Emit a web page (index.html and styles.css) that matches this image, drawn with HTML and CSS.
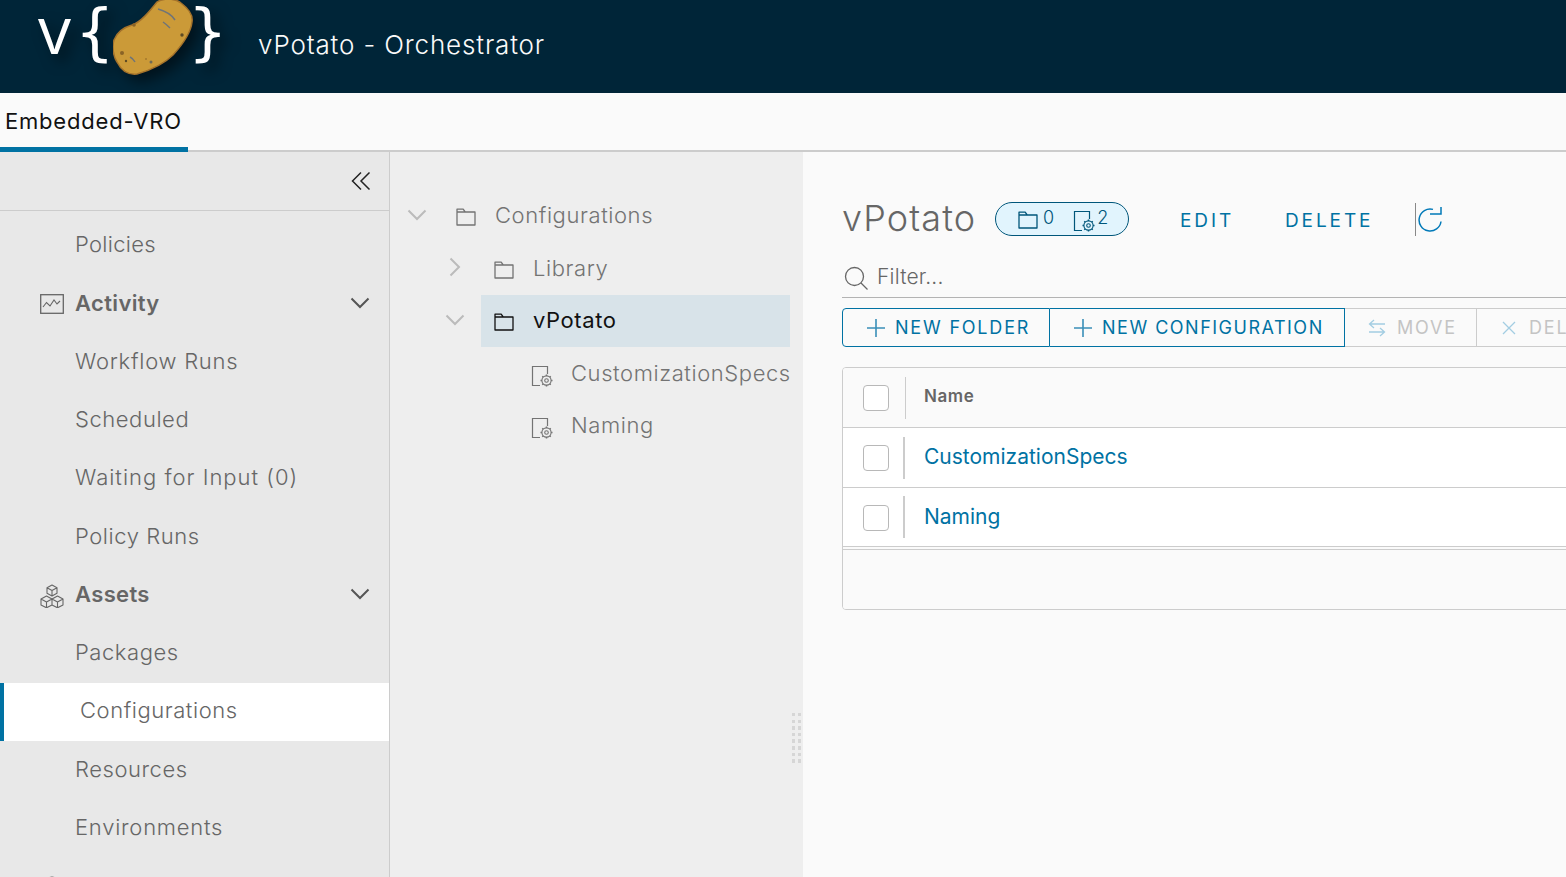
FILE: index.html
```html
<!DOCTYPE html>
<html lang="en">
<head>
<meta charset="utf-8">
<title>vPotato - Orchestrator</title>
<link rel="stylesheet" href="styles.css">
</head>
<body>
<svg class="defs" width="0" height="0">
  <symbol id="folder" viewBox="0 0 20 18"><path d="M1 4V1.200h6.200L9.200 4H19v13H1z M1 4h8.200" fill="none" stroke="currentColor" stroke-width="1.300" stroke-linejoin="round"/></symbol>
  <symbol id="docgear" viewBox="0 0 23 22"><path d="M9 20.500H1.500V1.500H16.500V9" fill="none" stroke="currentColor" stroke-width="1.200"/><circle cx="15.500" cy="15.500" r="1.800" fill="none" stroke="currentColor" stroke-width="1.100"/><circle cx="15.500" cy="15.500" r="4.600" fill="none" stroke="currentColor" stroke-width="1.100"/><path d="M15.500 9.500v1.400M15.500 20.100v1.400M9.500 15.500h1.400M20.100 15.500h1.400M11.300 11.300l1 1M18.700 18.700l1 1M11.300 19.700l1-1M18.700 12.300l1-1" stroke="currentColor" stroke-width="1.500"/></symbol>
  <symbol id="chev" viewBox="0 0 20 12"><path d="M1.500 1.500L10 10l8.500-8.500" fill="none" stroke="currentColor" stroke-width="2"/></symbol>
</svg>
<header class="topbar">
  <div class="logo">
    <span class="logo-v">v</span>
    <span class="logo-brace">{</span>
    <svg class="potato" viewBox="0 0 80 76" width="80" height="76">
      <path d="M44 2C50-2 62-2 68 3C76 9 80 16 79 22C78 32 70 44 60 55C52 63 38 70 24 74C15 75 8 70 4 62C0 56-1 46 1 40C4 32 12 27 19 25C28 22 36 12 44 2Z" fill="#cb9a38" stroke="#a4722b" stroke-width="1.500"/>
      <path d="M45 9C52 11 59 15 62 20M50 22C53 24 55 26 57 28M17 57C19 58 21 60 22 62" fill="none" stroke="#6f7478" stroke-width="1.500"/>
      <circle cx="21" cy="25" r="1.800" fill="#8a6326"/><circle cx="69" cy="35" r="1.700" fill="#5d4a24"/><circle cx="9" cy="53" r="2" fill="#8a6326"/><circle cx="13" cy="61" r="1.200" fill="#5d4a24"/><circle cx="38" cy="62" r="1.500" fill="#6f6a55"/><circle cx="33" cy="59" r="0.800" fill="#8a6326"/>
    </svg>
    <span class="logo-brace logo-brace-end">}</span>
  </div>
  <div class="app-title">vPotato - Orchestrator</div>
</header>
<nav class="tabs"><div class="tab">Embedded-VRO</div></nav>
<div class="workspace">
  <aside class="sidebar">
    <div class="side-head">
      <svg class="collapse" viewBox="0 0 20 20" width="20" height="20"><path d="M10 1.500L1.500 10l8.500 8.500M18.500 1.500L10 10l8.500 8.500" fill="none" stroke="#222" stroke-width="1.500"/></svg>
    </div>
    <ul class="side-list">
      <li class="side-item side-tight">Policies</li>
      <li class="side-item side-group">
        <svg class="side-icon" viewBox="0 0 24 20" width="24" height="20"><rect x="0.700" y="0.700" width="22.600" height="18.600" fill="none" stroke="#666" stroke-width="1.300"/><path d="M3 13l3.500-4.500L10 12l4-6 3 4 3-3" fill="none" stroke="#666" stroke-width="1.100"/></svg>
        Activity
        <svg class="side-chev" width="20" height="12"><use href="#chev"/></svg>
      </li>
      <li class="side-item side-wide">Workflow Runs</li>
      <li class="side-item">Scheduled</li>
      <li class="side-item side-wider">Waiting for Input (0)</li>
      <li class="side-item">Policy Runs</li>
      <li class="side-item side-group">
        <svg class="side-icon side-icon-box" viewBox="0 0 24 24" width="24" height="24"><path d="M12 1l5 2.700v5.600L12 12 7 9.300V3.700zM7 3.700l5 2.700 5-2.700M12 6.400v5.600M6.500 12l5.500 3v6l-5.500 2.800L1 21v-6zM1 15l5.500 3 5.500-3M6.500 18v5.800M17.500 12l5.500 3v6l-5.500 2.800L12 21v-6zM12 15l5.500 3 5.500-3M17.500 18v5.800" fill="none" stroke="#666" stroke-width="1.100" stroke-linejoin="round"/></svg>
        Assets
        <svg class="side-chev" width="20" height="12"><use href="#chev"/></svg>
      </li>
      <li class="side-item">Packages</li>
      <li class="side-item side-active">Configurations</li>
      <li class="side-item">Resources</li>
      <li class="side-item side-wide">Environments</li>
      <li class="side-item side-group">
        <svg class="side-icon side-icon-box" viewBox="0 0 24 24" width="24" height="24"><circle cx="12" cy="6" r="5" fill="none" stroke="#666" stroke-width="1.200"/></svg>
      </li>
    </ul>
  </aside>
  <section class="tree">
    <div class="tree-row tree-l0">
      <svg class="tree-chev" width="20" height="12"><use href="#chev"/></svg>
      <svg class="tree-icon" width="20" height="18"><use href="#folder"/></svg>
      <span>Configurations</span>
    </div>
    <div class="tree-row tree-l1">
      <svg class="tree-chev tree-chev-right" width="20" height="12"><use href="#chev"/></svg>
      <svg class="tree-icon" width="20" height="18"><use href="#folder"/></svg>
      <span>Library</span>
    </div>
    <div class="tree-row tree-l1 tree-selected">
      <svg class="tree-chev" width="20" height="12"><use href="#chev"/></svg>
      <div class="tree-sel-bg">
        <svg class="tree-icon" width="20" height="18"><use href="#folder"/></svg>
        <span>vPotato</span>
      </div>
    </div>
    <div class="tree-row tree-l2">
      <svg class="tree-icon tree-doc" width="23" height="22"><use href="#docgear"/></svg>
      <span>CustomizationSpecs</span>
    </div>
    <div class="tree-row tree-l2">
      <svg class="tree-icon tree-doc" width="23" height="22"><use href="#docgear"/></svg>
      <span>Naming</span>
    </div>
    <div class="splitter"></div>
  </section>
  <main class="content">
    <div class="title-row">
      <h1 class="title">vPotato</h1>
      <div class="pill">
        <svg class="pill-folder" width="20" height="18"><use href="#folder"/></svg><span class="pill-num">0</span>
        <svg class="pill-doc" width="23" height="22"><use href="#docgear"/></svg><span class="pill-num">2</span>
      </div>
      <a class="link-btn link-edit">EDIT</a>
      <a class="link-btn link-delete">DELETE</a>
      <div class="title-sep"></div>
      <svg class="refresh" viewBox="0 0 26 26" width="26" height="26"><path d="M16 3.400A11 11 0 1 0 24 15.500" fill="none" stroke="#0079b8" stroke-width="1.500"/><path d="M13 8H24V1" fill="none" stroke="#0079b8" stroke-width="1.500"/></svg>
    </div>
    <div class="filter">
      <svg class="filter-icon" viewBox="0 0 24 24" width="24" height="24"><circle cx="10.500" cy="10.500" r="9" fill="none" stroke="#666" stroke-width="1.300"/><path d="M17 17l6.500 6.500" stroke="#666" stroke-width="1.300"/></svg>
      <span class="filter-text">Filter...</span>
    </div>
    <div class="actions">
      <button class="act act-primary act-folder"><svg class="plus" viewBox="0 0 20 20" width="20" height="20"><path d="M10 1v18M1 10h18" stroke="#3a8fb8" stroke-width="1.600"/></svg>NEW FOLDER</button>
      <button class="act act-primary act-config"><svg class="plus" viewBox="0 0 20 20" width="20" height="20"><path d="M10 1v18M1 10h18" stroke="#3a8fb8" stroke-width="1.600"/></svg>NEW CONFIGURATION</button>
      <button class="act act-off act-move"><svg class="plus plus-move" viewBox="0 0 18 18" width="18" height="18"><path d="M17 5H2M6 1L1.500 5 6 9M1 13h15M12 9l4.500 4-4.500 4" fill="none" stroke="#a3cde2" stroke-width="1.300"/></svg>MOVE</button>
      <button class="act act-off act-del"><svg class="plus plus-del" viewBox="0 0 16 16" width="16" height="16"><path d="M2 2l12 12M14 2L2 14" stroke="#a3cde2" stroke-width="1.300"/></svg>DELETE</button>
    </div>
    <div class="grid">
      <div class="grid-row grid-head">
        <span class="check"></span><span class="sep sep-thin"></span><span class="cell-name">Name</span>
      </div>
      <div class="grid-row grid-body">
        <span class="check"></span><span class="sep"></span><a class="cell-link">CustomizationSpecs</a>
      </div>
      <div class="grid-row grid-body grid-last">
        <span class="check"></span><span class="sep"></span><a class="cell-link">Naming</a>
      </div>
      <div class="grid-foot"></div>
    </div>
  </main>
</div>
</body>
</html>
```
FILE: styles.css
```css
* { box-sizing: border-box; }
html, body { margin: 0; height: 100%; overflow: hidden; }
body { font-family: Inter, "Liberation Sans", sans-serif; font-weight: 300; color: #666; background: #fafafa; }
.defs { position: absolute; }

.topbar { height: 93px; background: #002538; display: flex; align-items: center; color: #fafafa; }
.logo { position: relative; width: 258px; height: 93px; flex: none; color: #fff; filter: drop-shadow(7px 7px 7px rgba(0,0,0,.5)); }
.logo-v { position: absolute; left: 38px; top: 0; font: 400 66px/56px "Open Sans", sans-serif; }
.logo-brace { position: absolute; left: 75px; top: 0; font: 400 62px/64px "DejaVu Sans", sans-serif; }
.logo-brace-end { left: 188px; }
.potato { position: absolute; left: 113px; top: 0; }
.app-title { font-size: 26px; font-weight: 300; letter-spacing: .85px; position: relative; top: -2px; }

.tabs { height: 59px; background: #fafafa; border-bottom: 2px solid #ccc; }
.tab { width: 188px; height: 59px; padding: 14px 0 0 5px; font-size: 22px; font-weight: 400; letter-spacing: .8px; line-height: 28px; color: #111; border-bottom: 5px solid #0072a3; white-space: nowrap; }

.workspace { display: flex; height: calc(100vh - 152px); }

.sidebar { width: 390px; flex: none; background: #e8e8e8; border-right: 1px solid #ccc; overflow: hidden; }
.side-head { height: 59px; border-bottom: 1px solid #ccc; display: flex; justify-content: flex-end; align-items: center; padding: 0 18px 0 0; }
.side-list { list-style: none; margin: 0; padding: 5.800px 0 0; }
.side-item { height: 58.25px; display: flex; align-items: center; padding-left: 75px; font-size: 22px; letter-spacing: .55px; color: #666; position: relative; padding-bottom: 3px; white-space: nowrap; }
.side-tight { letter-spacing: .3px; }
.side-wide { letter-spacing: .75px; }
.side-wider { letter-spacing: 1px; }
.side-group { font-weight: 600; letter-spacing: .35px; }
.side-icon { position: absolute; left: 40px; top: 19px; }
.side-icon-box { top: 18px; }
.side-chev { position: absolute; left: 350px; top: 22px; color: #555; }
.side-active { background: #fff; border-left: 4px solid #0072a3; padding-left: 76px; }

.tree { width: 413px; flex: none; background: #eee; padding-top: 38px; position: relative; }
.tree-row { height: 52.4px; display: flex; align-items: center; font-size: 22px; letter-spacing: .58px; color: #737373; white-space: nowrap; position: relative; padding-bottom: 2px; }
.tree-chev { position: absolute; color: #bbb; top: 19px; }
.tree-chev-right { transform: rotate(-90deg); }
.tree-icon { position: relative; top: 2px; }
.tree-l0 { padding-left: 66px; }
.tree-l0 .tree-chev { left: 17px; }
.tree-l0 .tree-icon { margin-right: 19px; }
.tree-l1 { padding-left: 104px; }
.tree-l1 .tree-chev { left: 55px; }
.tree-l1 .tree-icon { margin-right: 19px; }
.tree-l2 { padding-left: 141px; padding-bottom: 1px; }
.tree-doc { margin-right: 17px; top: 3px; }
.tree-selected { padding-left: 91px; padding-bottom: 0; }
.tree-sel-bg { width: 309px; height: 100%; background: #d8e3e9; display: flex; align-items: center; padding: 0 0 2px 13px; color: #111; font-weight: 400; }
.tree-sel-bg .tree-icon { margin-right: 19px; }
.splitter { position: absolute; left: 402px; top: 561px; width: 9px; height: 50px; background: #d6d6d6; -webkit-mask-image: repeating-linear-gradient(#000 0 3.500px, transparent 3.500px 6.600px), linear-gradient(90deg, #000 3px, transparent 3px, transparent 6px, #000 6px); -webkit-mask-composite: source-in; mask-composite: intersect; }

.content { flex: 1; min-width: 0; padding: 50px 0 0 39px; background: #fafafa; overflow: hidden; }
.title-row { display: flex; align-items: center; height: 34px; width: 700px; }
.title { margin: 0; font-size: 36px; font-weight: 300; letter-spacing: 1.100px; color: #666; width: 153px; flex: none; line-height: 34px; position: relative; top: -1px; }
.pill { width: 134px; height: 34px; flex: none; border: 1.500px solid #00567a; border-radius: 17px; background: #e1f4fd; display: flex; align-items: center; padding-left: 22px; color: #00567a; font-size: 18px; }
.pill-num { position: relative; top: -2px; margin-left: 5px; font-weight: 300; }
.pill-folder { position: relative; top: 1px; }
.pill-doc { margin-left: 19px; position: relative; top: 2px; margin-right: -4px; }
.link-btn { color: #0072a3; font-size: 19px; font-weight: 400; letter-spacing: 2.900px; white-space: nowrap; flex: none; position: relative; top: 1px; }
.link-edit { margin-left: 51px; width: 105px; }
.link-delete { width: 130px; }
.title-sep { width: 1px; height: 33px; background: #888; flex: none; }
.refresh { margin-left: 1px; flex: none; }

.filter { height: 62px; display: flex; align-items: center; border-bottom: 1px solid #b3b3b3; padding: 23px 0 0 2px; width: 1000px; }
.filter-icon { flex: none; }
.filter-text { margin-left: 9px; font-size: 21px; letter-spacing: .2px; color: #666; position: relative; top: -2px; }

.actions { display: flex; height: 39px; margin-top: 10px; width: 1000px; }
.act { height: 39px; background: transparent; font-family: inherit; font-size: 18px; font-weight: 400; letter-spacing: 1.800px; display: flex; align-items: center; padding: 0; border: 1px solid; flex: none; white-space: nowrap; }
.act-primary { color: #0072a3; border-color: #0072a3; }
.act-folder { width: 208px; padding-left: 23px; border-radius: 4px 0 0 4px; }
.act-config { width: 295px; padding-left: 23px; border-left: none; letter-spacing: 1.500px; }
.act-off { color: #c4c4c4; border-color: #ccc; border-left: none; }
.act-move { width: 132px; padding-left: 23px; }
.act-del { width: 140px; padding-left: 24px; }
.plus { margin-right: 9px; flex: none; }
.plus-move { margin-right: 11px; }
.plus-del { margin-right: 12px; }

.grid { width: 1000px; margin-top: 20px; border: 1px solid #ccc; border-radius: 4px; height: 243px; overflow: hidden; }
.grid-row { height: 60px; display: flex; align-items: center; border-bottom: 1px solid #ccc; padding-left: 20px; }
.grid-head { background: #fafafa; }
.grid-body { background: #fff; }
.grid-last { height: 59px; }
.check { width: 26px; height: 26px; flex: none; border: 1px solid #b8b8b8; border-radius: 4px; background: #fff; margin-top: 1px; }
.sep { width: 2px; height: 42px; flex: none; background: #ccc; margin: 0 19px 0 14px; }
.sep-thin { width: 1px; margin: 0 18px 0 16px; }
.cell-name { font-size: 17px; font-weight: 600; letter-spacing: .6px; color: #666; position: relative; top: -2px; }
.cell-link { font-size: 21px; color: #0072a3; position: relative; top: -1px; font-weight: 400; }
.grid-foot { height: 60px; margin-top: 2px; border-top: 1px solid #ccc; background: #fafafa; }
```
